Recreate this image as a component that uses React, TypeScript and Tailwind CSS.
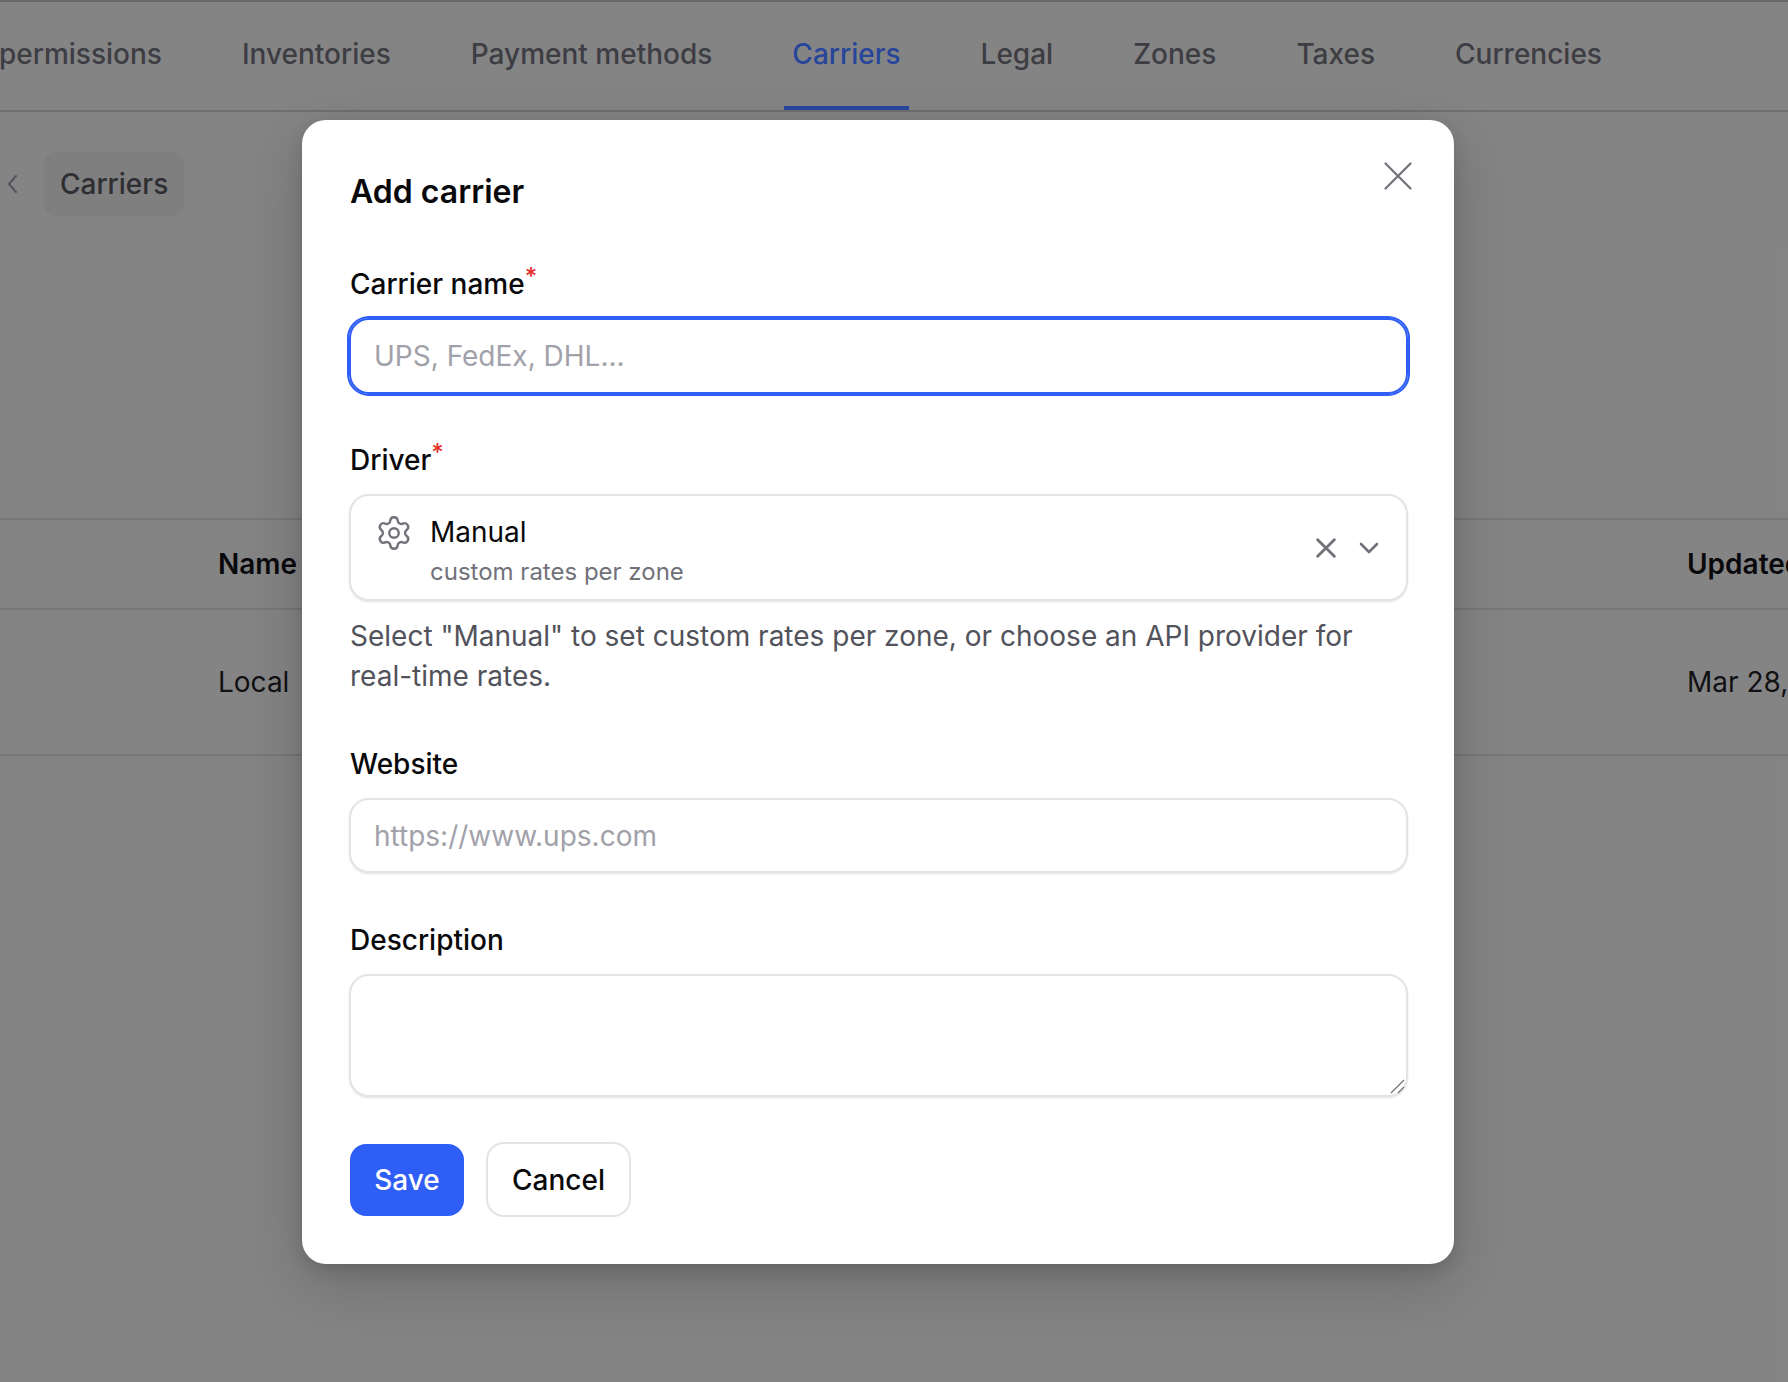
import { Settings } from "lucide-react";

const tabs = ["permissions", "Inventories", "Payment methods", "Carriers", "Legal", "Zones", "Taxes", "Currencies"];

function Label({ text, required }: { text: string; required?: boolean }) {
  return (
    <label className="block h-[40px] pl-[1px] text-[28px] leading-[40px] font-medium text-[#09090b]">
      {text}
      {required && <sup className="top-[-9px] text-[24px] leading-none text-[#e5322d]">*</sup>}
    </label>
  );
}

function CloseIcon({ className }: { className: string }) {
  return (
    <svg viewBox="0 0 24 24" fill="none" stroke="currentColor" strokeLinecap="round" className={className}>
      <path d="M2 2 22 22M22 2 2 22" />
    </svg>
  );
}

export default function App() {
  return (
    <div className="relative h-[1382px] w-[1788px] overflow-hidden bg-white font-['Inter',sans-serif] text-[28px] antialiased">
      {/* page behind the dialog */}
      <div className="-ml-[9px] flex h-[112px] gap-[64px] whitespace-nowrap border-y-2 border-[#d4d4d8] border-t-[#c4c4c8]">
        {tabs.map((tab) => (
          <div
            key={tab}
            className={
              tab === "Carriers"
                ? "relative z-10 flex h-[108px] items-center border-b-4 border-[#27459a] px-2 font-medium text-[#27459a]"
                : "flex h-[108px] items-center border-b-4 border-transparent px-2 font-medium text-[#71717a]"
            }
          >
            {tab}
          </div>
        ))}
      </div>

      <div className="flex h-[406px] items-start pl-[7px] pt-[40px]">
        <svg viewBox="0 0 10 20" fill="none" stroke="#a1a1aa" strokeWidth="2" strokeLinecap="round" strokeLinejoin="round" className="mt-[22px] h-[20px] w-[10px]">
          <path d="M9 2 2 10l7 8" />
        </svg>
        <div className="ml-[27px] flex h-[64px] items-center rounded-[12px] bg-[#f4f4f5] px-[16px] font-medium text-[#52525b]">
          Carriers
        </div>
      </div>

      <div className="grid h-[92px] grid-cols-[1469px_1fr] items-center whitespace-nowrap border-y-2 border-[#e4e4e7] pl-[218px] font-semibold text-[#09090b]">
        <div>Name</div>
        <div>Updated at</div>
      </div>
      <div className="grid h-[146px] grid-cols-[1469px_1fr] items-center whitespace-nowrap border-b-2 border-[#e4e4e7] pl-[218px] text-[#18181b]">
        <div>Local</div>
        <div>Mar 28, 2025</div>
      </div>

      {/* overlay */}
      <div className="absolute inset-0 bg-[#0a0a0c]/50" />

      {/* dialog */}
      <div className="absolute left-[302px] top-[120px] h-[1144px] w-[1152px] rounded-[24px] bg-white pl-[47px] pr-[46px] pt-[48px] shadow-[0_20px_60px_rgba(0,0,0,0.18),0_6px_16px_rgba(0,0,0,0.12)]">
        <CloseIcon className="absolute right-[41px] top-[41px] h-[30px] w-[30px] text-[#71717a] [stroke-width:1.8]" />
        <h2 className="h-[48px] pl-[1px] text-[32px] leading-[48px] font-semibold text-[#09090b]">Add carrier</h2>

        <div className="mt-[48px]">
          <Label text="Carrier name" required />
          <input
            placeholder="UPS, FedEx, DHL..."
            className="mt-[14px] block h-[76px] w-full rounded-[20px] border-2 border-[#2f5ef7] px-[23px] text-[28px] text-[#09090b] outline-none ring-2 ring-[#2f5ef7] placeholder:text-[#a1a1aa]"
          />
        </div>

        <div className="mt-[46px]">
          <Label text="Driver" required />
          <div className="mt-[14px] flex h-[107px] w-full items-center rounded-[20px] border-2 border-[#e4e4e7] pl-[26px] pr-[27px] shadow-[0_1px_2px_rgba(0,0,0,0.12)]">
            <Settings size={38} strokeWidth={1.5} className="mb-[30px] -ml-[2px] text-[#71717a]" />
            <div className="ml-[17px] flex-1 pt-[6px]">
              <div className="text-[28px] leading-[40px] text-[#09090b]">Manual</div>
              <div className="mt-[2px] text-[24px] leading-[36px] text-[#71717a]">custom rates per zone</div>
            </div>
            <CloseIcon className="h-[20px] w-[20px] text-[#71717a] [stroke-width:3.4]" />
            <svg viewBox="0 0 20 12" fill="none" stroke="#71717a" strokeWidth="2.6" strokeLinecap="round" strokeLinejoin="round" className="ml-[23px] h-[12px] w-[20px]">
              <path d="M2 2l8 8 8-8" />
            </svg>
          </div>
          <p className="mt-[15px] pl-[1px] text-[28px] leading-[40px] text-[#52525b]">
            Select "Manual" to set custom rates per zone, or choose an API provider for real-time rates.
          </p>
        </div>

        <div className="mt-[48px]">
          <Label text="Website" />
          <input
            placeholder="https://www.ups.com"
            className="mt-[14px] block h-[75px] w-full rounded-[20px] border-2 border-[#e4e4e7] px-[23px] text-[28px] outline-none shadow-[0_1px_2px_rgba(0,0,0,0.12)] placeholder:text-[#a1a1aa]"
          />
        </div>

        <div className="mt-[47px]">
          <Label text="Description" />
          <div className="relative mt-[14px]">
            <textarea className="block h-[123px] w-full resize-none rounded-[20px] border-2 border-[#e4e4e7] outline-none shadow-[0_1px_2px_rgba(0,0,0,0.12)]" />
            <svg viewBox="0 0 15 15" fill="none" stroke="#71717a" strokeWidth="1.2" className="absolute bottom-[3px] right-[3px] h-[15px] w-[15px]">
              <path d="M1 14 14 1M8 14l6-6" />
            </svg>
          </div>
        </div>

        <div className="mt-[45px] flex items-center pl-[1px]">
          <button className="h-[72px] w-[114px] rounded-[16px] bg-[#2f5ef7] text-[28px] font-medium text-white">Save</button>
          <button className="ml-[22px] h-[75px] w-[145px] rounded-[18px] border-2 border-[#e4e4e7] text-[28px] font-medium text-[#09090b]">
            Cancel
          </button>
        </div>
      </div>
    </div>
  );
}
